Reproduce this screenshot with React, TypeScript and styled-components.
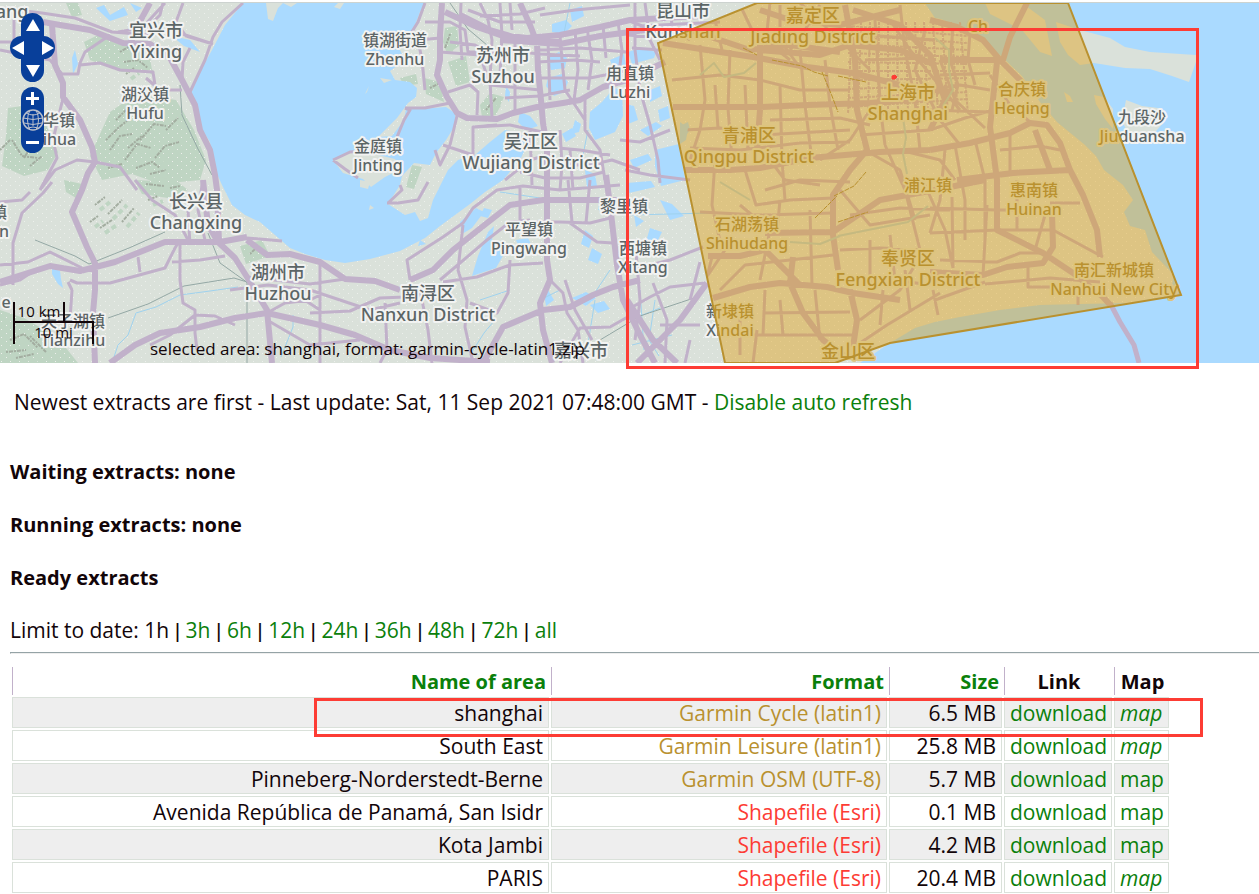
import React from "react";
import styled, { createGlobalStyle } from "styled-components";

const GlobalStyle = createGlobalStyle`
  body {
    margin: 0;
    background: #fff;
    color: #120509;
    font-family: "Open Sans", "Noto Sans", "Noto Sans CJK SC", sans-serif;
    font-size: 21px;
    line-height: 27px;
  }
`;

const GREEN = "#0b800b";
const RED = "#fd3c34";
const NAVY = "#083f9a";
const ROAD = "#c1b1ca";
const LAND = "#dae1da";
const WATER = "#aadaff";
const PARK = "#bfd5c3";
const GOLD = "#b9912f";
const SAND = "#ddc47e";
const INK = "#5c6566";
const HALO = "#f2f3f2";

/* ---------- layout ---------- */

const Page = styled.div`
  overflow: hidden;
`;

const MapFrame = styled.section`
  position: relative;
  height: 360px;
  border-top: 1px solid #cdd3d0;
  margin-top: 2px;
`;

const MapDrawing = styled.svg`
  display: block;
  width: 100%;
  height: 360px;
`;

const Highlight = styled.div<{ $left: number; $top: number; $width: number; $height: number }>`
  position: absolute;
  box-sizing: border-box;
  left: ${(p) => p.$left}px;
  top: ${(p) => p.$top}px;
  width: ${(p) => p.$width}px;
  height: ${(p) => p.$height}px;
  border: 3px solid ${RED};
  pointer-events: none;
`;

const Controls = styled.div`
  position: absolute;
  left: 10px;
  top: 10px;
  display: flex;
  flex-direction: column;
  align-items: center;
  gap: 5px;
`;

const PanPad = styled.div`
  position: relative;
  display: grid;
  grid-template: repeat(3, 23px) / repeat(3, 15px);
  &::before,
  &::after {
    content: "";
    position: absolute;
    background: ${NAVY};
    border-radius: 12px;
  }
  &::before {
    inset: 0 11px;
  }
  &::after {
    inset: 23px 0;
  }
`;

const PanButton = styled.button<{ $area: string }>`
  grid-area: ${(p) => p.$area};
  z-index: 1;
  display: flex;
  align-items: center;
  justify-content: center;
  padding: 0;
  border: 0;
  background: none;
  cursor: pointer;
`;

const ZoomPad = styled.div`
  display: flex;
  flex-direction: column;
  width: 23px;
  border-radius: 12px;
  background: ${NAVY};
`;

const ZoomButton = styled.button`
  display: flex;
  align-items: center;
  justify-content: center;
  height: 22px;
  padding: 0;
  border: 0;
  background: none;
  cursor: pointer;
`;

const ScaleLine = styled.div`
  position: absolute;
  left: 13px;
  top: 299px;
  font-size: 15px;
  line-height: 19px;
  text-align: center;
`;

const ScaleTop = styled.div`
  box-sizing: border-box;
  width: 52px;
  border: solid #120509;
  border-width: 0 2px;
`;

const ScaleBottom = styled.div`
  box-sizing: border-box;
  width: 81px;
  height: 23px;
  border: solid #120509;
  border-width: 2px 2px 0;
`;

const Selection = styled.div`
  position: absolute;
  left: 150px;
  bottom: 3px;
  font-size: 17px;
  line-height: 22px;
`;

const Content = styled.main`
  padding: 26px 0 0 10px;
`;

const Status = styled.p`
  margin: 0 0 42px;
  padding-left: 4px;
`;

const Heading = styled.h4`
  margin: 0 0 26px;
  font-size: 20px;
  font-weight: 700;
`;

const Limits = styled.nav`
  padding-bottom: 8px;
`;

const Bar = styled.span`
  font-family: "Liberation Sans", sans-serif;
`;

const TextLink = styled.a<{ $italic?: boolean }>`
  color: ${GREEN};
  text-decoration: none;
  font-style: ${(p) => (p.$italic ? "italic" : "normal")};
`;

const Rule = styled.hr`
  margin: 0;
  border: solid #95a3a6;
  border-width: 1px 0 1px 1px;
  border-bottom-color: #eee;
`;

const TableArea = styled.div`
  position: relative;
  padding: 11px 88px 0 0;
`;

const ExtractTable = styled.table`
  width: 100%;
  table-layout: fixed;
  border-collapse: separate;
  border-spacing: 2px;
`;

const Col = styled.col<{ $width?: number }>`
  width: ${(p) => (p.$width ? `${p.$width}px` : "auto")};
`;

const HeadCell = styled.th<{ $align?: string }>`
  padding: 2px 3px 0 4px;
  border-left: 1px solid ${ROAD};
  font-size: 20px;
  text-align: ${(p) => p.$align ?? "right"};
  line-height: 26px;
`;

const Cell = styled.td<{ $tone?: string; $align?: string }>`
  padding: 2px 5px 0;
  border: 1px solid #dae1da;
  color: ${(p) => p.$tone ?? "inherit"};
  text-align: ${(p) => p.$align ?? "right"};
  line-height: 27px;
  white-space: nowrap;
`;

const Row = styled.tr`
  &:nth-child(odd) ${Cell} {
    background: #eee;
  }
`;

/* ---------- map geometry ---------- */

const majorRoads = [
  "43,22 60,25 90,30 123,43 150,44 170,58 182,80 195,105 200,130 210,150 215,175 217,190 219,242",
  "52,25 55,65 63,83 63,97 80,120 92,147 95,162 88,173 82,190 72,212 87,247 95,263 95,290 93,313 95,363",
  "0,282 50,266 80,271 115,262 165,242 220,242 247,237",
  "203,180 208,225 218,242 235,258 247,277 267,310 272,363",
  "247,240 267,255 290,254 320,262 345,279 375,281 400,290",
  "110,363 135,345 160,333 200,327 235,318 267,313 320,325 355,335 390,350 430,358 490,362",
  "442,3 440,35 440,60 437,75 447,97 457,113 467,118 497,119 513,113 537,107 563,103 580,100 603,87 627,80 665,62",
  "520,3 530,25 537,43 538,70 541,100 543,123 547,147 547,190 547,260 550,280 540,303 543,330 552,363",
  "445,12 477,27 500,35 527,38 560,35 600,27 630,20 700,16",
  "410,280 433,270 453,250 487,223 510,205 543,200 627,200",
  "483,363 503,327 543,310 570,307 593,295 613,287 640,280",
  "606,175 610,205 617,265 623,300 640,335 655,363",
  "707,283 680,320 653,347 637,363",
  "627,300 653,340 677,363",
  "150,3 138,25 130,44",
  "460,15 490,30 530,42 560,42",
  "500,40 560,44 600,36 660,28",
];

const minorRoads = [
  "0,8 42,13 75,18 112,32 150,35 170,30 213,44",
  "243,3 222,22 213,37 205,60 190,92",
  "70,280 77,283 110,283 165,268 175,248 180,240",
  "180,245 180,280 183,303 195,310 195,333 197,350",
  "172,262 200,260 225,256",
  "138,257 140,272",
  "13,285 13,243 22,213 43,193 52,182",
  "0,202 22,200 30,192",
  "40,190 55,170 77,160 95,162 120,167 137,190",
  "110,35 85,52 80,63 78,74 62,74 50,60 0,50",
  "80,65 100,63 120,70 153,72 155,85",
  "0,42 14,42 14,8",
  "40,190 57,158 53,140 63,98",
  "0,265 28,262 50,252 82,268",
  "0,285 20,280 35,270",
  "68,282 72,290 70,320",
  "183,3 176,22 186,36 213,44",
  "165,3 142,28 118,32",
  "190,48 183,62 182,80",
  "182,90 160,90 146,78",
  "163,3 160,15 145,30",
  "135,180 152,200 175,215 188,240",
  "188,210 190,245",
  "203,180 198,210 205,240",
  "150,345 170,335 195,315 215,316 235,325",
  "282,241 247,238",
  "267,313 285,303 310,300 320,295",
  "320,262 320,363",
  "247,277 310,284 345,279",
  "230,290 268,285 310,290 370,310 400,303",
  "385,303 387,350 380,363",
  "420,290 428,330 432,363",
  "267,320 310,345 360,340",
  "310,313 350,311 380,298 405,297",
  "270,300 300,297 320,310",
  "410,280 407,260 443,237 463,223 473,208 497,190 523,186 560,190 620,185",
  "463,225 458,270 467,300 465,327 473,363",
  "440,280 487,240 510,222 530,220",
  "443,282 477,277 510,265 543,263",
  "510,260 508,293 497,313 470,303",
  "550,280 563,293 567,313 578,330 583,363",
  "570,223 597,242 613,243",
  "520,187 520,222",
  "530,130 532,185",
  "568,180 572,222",
  "590,180 586,223",
  "510,222 560,222 590,223 610,218",
  "560,363 580,328 610,327 640,310",
  "565,280 575,310 592,340",
  "497,125 473,127 473,155 443,145",
  "475,127 510,125 547,133",
  "457,116 450,145 440,165 435,150",
  "405,108 425,108 450,103",
  "425,3 418,22 408,38",
  "440,38 418,40 422,60 425,90",
  "425,22 450,22 465,30 468,52 498,52",
  "461,3 460,30 462,60",
  "440,52 480,55 490,85 520,88 540,90",
  "448,92 470,85 478,92 477,115",
  "480,3 488,20 492,40 490,80 492,118",
  "500,3 502,35 500,75",
  "510,3 512,30",
  "468,10 500,22 535,22",
  "515,40 515,110",
  "480,16 520,14 545,8",
  "450,42 475,45 500,60",
  "500,50 540,54 580,56",
  "505,98 540,96 570,90",
  "548,40 550,100",
  "540,15 575,10 630,5",
  "537,50 580,48 627,52",
  "537,62 575,60 600,62",
  "540,78 590,78 630,70",
  "560,35 562,60 565,90 585,120",
  "575,30 578,70 574,100",
  "587,28 592,60 588,90",
  "603,25 606,58",
  "618,22 622,50 618,80",
  "585,98 585,130 600,150 605,180",
  "547,147 580,150 610,155",
  "547,165 590,165 612,160 640,170",
  "505,180 530,160 547,155",
  "520,172 545,178 580,178 604,172",
  "560,190 562,165 560,130",
  "573,190 570,150",
  "635,3 635,50 640,90 650,125 658,160 660,183",
  "620,140 640,142 670,130",
  "625,170 650,175 690,180",
  "627,20 665,35",
  "645,3 650,40 660,60",
  "627,35 670,38",
  "632,48 662,50",
  "640,26 720,22",
  "670,3 672,26 690,40",
  "703,247 670,260 650,265",
  "653,283 667,320 665,363",
  "627,310 650,297 670,287 705,283",
  "700,262 690,300",
  "635,240 640,300 635,340",
  "700,325 660,325",
  "690,340 685,363",
  "333,160 350,152 375,150",
  "333,160 345,169 358,178",
  "387,203 398,203 418,200 428,182",
  "400,185 402,190 388,203",
  "397,137 404,120 410,110 405,108",
];

const areaMajor = [
  "663,43 707,50 753,57 807,67 853,73 900,85 950,92",
  "673,107 720,107 760,107 807,105 870,103 930,98",
  "760,45 760,110 757,150",
  "845,5 855,60 857,110 867,150 850,170 833,195 833,235 838,270",
  "765,233 833,232 880,200 935,190 985,180",
  "713,298 750,287 780,283 827,287 853,293 900,300",
  "793,257 790,283 803,313 823,340 850,360",
  "997,62 990,127 997,180 997,230 1043,253 1073,273 1103,297 1112,307",
  "1052,213 1053,247 1043,263 1007,267 983,275 930,272",
  "930,20 957,27 983,40 1000,60 1023,83",
  "1027,3 1010,37 1003,60 940,60",
  "930,150 970,143 1010,133 1030,123 1047,125 1060,143 1070,170 1083,195 1097,230 1100,257",
  "957,180 1013,173 1070,170",
  "685,170 730,170 760,168 810,158 880,152 930,150",
  "708,256 740,256 765,250 800,285",
  "853,10 900,25 930,55 945,100 930,130",
  "760,10 790,20 840,25 900,10",
  "690,30 750,50 790,45 840,52",
  "850,290 857,320 853,347",
  "760,50 820,55 850,45 900,50 935,65",
  "1035,130 1050,170",
];

const areaMinor = [
  "700,45 705,100 700,130 690,160",
  "730,50 728,108 732,160",
  "672,80 720,75 760,80 800,90 850,90",
  "740,5 752,30 790,60",
  "715,20 722,50",
  "770,3 765,50",
  "780,5 780,40 800,68",
  "800,3 840,40 870,70",
  "820,5 805,30 790,50",
  "800,50 805,105 812,160",
  "825,60 830,105 838,150",
  "685,130 720,128 760,135 850,130",
  "780,85 782,160 785,200",
  "745,85 748,150",
  "715,85 718,128",
  "690,148 740,150 800,143 850,142",
  "770,120 840,118 870,125",
  "715,160 712,205 722,250",
  "745,170 756,205 790,200 833,198",
  "770,160 785,180 820,185",
  "765,190 800,180 850,182",
  "700,212 760,215 833,213",
  "740,205 770,230 760,280",
  "712,257 705,285",
  "720,290 745,265 790,260 833,255",
  "725,250 708,275",
  "763,313 850,312",
  "753,335 853,335",
  "757,330 753,363",
  "765,290 763,335",
  "780,300 783,335",
  "740,315 740,355",
  "815,290 820,340",
  "857,345 887,325 940,293",
  "860,320 900,290 915,265",
  "840,250 880,248 930,250",
  "865,150 900,170 915,220",
  "850,215 900,208 950,210",
  "880,105 885,145 905,190 920,250",
  "900,5 905,50 915,100 920,150",
  "875,20 880,100",
  "865,60 925,58",
  "865,35 935,40",
  "870,115 930,110 990,112",
  "860,135 930,130",
  "890,20 910,50 960,110",
  "870,110 850,140 820,160",
  "925,30 915,70 940,120 960,145",
  "940,60 955,100 985,128",
  "940,75 990,73",
  "930,90 960,85 990,90",
  "953,28 950,60 958,85 952,110",
  "970,33 968,60 975,85",
  "930,130 965,118 1000,108",
  "990,75 1010,105 1030,122",
  "955,145 965,200 965,240",
  "975,140 985,180 985,240",
  "1010,135 1010,172",
  "945,150 940,200 930,233",
  "1000,150 1040,146 1060,150",
  "952,197 953,268",
  "987,205 983,275",
  "930,208 997,210 1052,210",
  "930,233 997,230 1053,230 1103,257",
  "940,260 997,262 1020,253 1045,253",
  "1017,180 1017,230",
  "1045,215 1035,250",
  "1050,203 1080,203",
  "1028,262 1028,287 1050,287",
  "985,284 1050,278 1100,282",
  "935,300 985,282",
  "933,290 938,315",
  "883,290 880,325",
  "905,270 910,310",
  "870,240 870,290",
  "890,235 895,280 930,285",
  "1078,290 1078,305",
  "900,150 940,160 955,180",
  "925,185 945,230 953,268",
  "840,190 870,225 930,215",
  "810,210 812,285",
  "780,200 777,232",
];

const cityStreets = Array.from({ length: 13 }, (_, i) => `M${852 + i * 9} 22l${i - 4} 92`)
  .concat(Array.from({ length: 10 }, (_, i) => `M848 ${26 + i * 9}l120 ${10 - i * 2}`))
  .join("");

const toPath = (lines: string[]) => lines.map((l) => `M${l.split(" ").join("L")}`).join("");

const lakes =
  "M96 8l8-3 6 10 14-8 4 8-18 6zM172 36l18 4 10 12-16-6zM75 50l3 14-5 10-1-16zM52 268l8 3 1 8 2 9-5-4-6-10zM130 3l12 5-6 4z" +
  "M547 58l12-6 8 6-2 10-14 2zM548 78l14-4 6 8-4 10-10 4-8-10zM552 24l14-4 6 6-8 8-12-2zM570 10l12-4 2 10-12 6z" +
  "M590 112l12-10 12-14 8 2 1 26-8 16-20 8-6-12zM575 120l6 4-2 8-8 2zM562 134l10-6 4 8-10 6zM520 112l10 4 8 10-12 4-8-8z" +
  "M506 86l4 6-1 10-4-6zM585 170l10 4 2 12-10 2zM610 60l14-6 2 12-12 4zM628 52l12-4 16 4-2 6-22 6z" +
  "M488 232l6-6-2 14 12 14-8 14-24 8 6-20zM460 222l16-14 8 4-12 16-10 6zM484 208l8 2-4 8-8-2zM516 240l12-2 4 8-12 4zM600 200l14 4-2 8-14-2zM585 230l8 6-4 12-8-4zM592 248l10 6-4 10-10-4zM572 298l14-6 10 6-10 8zM544 294l4-4 6 10-8 6zM590 305l14-4 6 8-12 4zM420 240l6 4-8 2z" +
  "M655 150l24-6 6 36-24 6-6-20zM626 104l8 2 4 14-10 4zM640 130l16-8 6 4-14 10zM630 160l18-6 4 6-18 8zM660 200l12 4 12 12-14 4zM650 228l12 4-6 12-12 4zM658 110l10-4 2 12-10 4zM650 90l10-4 2 10-12 6zM634 215l10 6-8 6zM627 183l24-2 4 6-26 6z" +
  "M680 126l8-4 2 8-6 8z";

const parks =
  "M84 42l16-8 22 6 28 18 2 12-30 2-32-12zM8 108l14-2 20 10 16 36-10 18-24 6-22-10 4-30zM110 112l26-18 40 6 18 30 12 30-6 20-40 4-28-10-30 6-12-24z" +
  "M0 310l24 8 34 20 20 25H0zM240 246l22-6 8 16-24 8zM134 180l44 2 10 8-20 8-26-4zM400 78l16-4 2 10-14 2zM445 28l12-2 2 20-12 8-4-12z" +
  "M448 62l18-6 4 26-14 4zM424 78l16 4 4 20-18-8zM480 105l10-12 14 4-8 18-14 2zM348 155l24 2 20 14-14 10-26-12zM412 165l10 2-8 22-8-2zM66 3l12 0 4 12-10 2zM64 180l18 4-6 14-10-6z";

const hills =
  "M120 52l10-6 8 4M124 62l14-2 10 8M126 74l8-6M110 150l10-14 12-2M106 140l12-12 10-8M125 160l12-16 14 4M128 148l14-12M140 140l14-16 12 2M155 158l10-12 14-4M166 130l12-12M108 168l14-4M136 168l16-6 8 6M150 174l16-4M20 120l8 16 14 4M12 140l10 16 16 2M24 158l6-10 14-4M30 166l12-10M0 150l10-10M10 340l14-6 14 14M6 352l20-2M16 358l18-4M30 336l16 16M95 205l10-8M108 214l14-14M122 222l12-14M90 222l8-6M100 228l12-8M148 200l10-4M116 120l10-10M450 34l-5 14M430 88l8-4M486 110l10-12M250 254l8-8M146 184l18 2M170 188l10-2";

const streams =
  "M112 363l6-18 10-10 8-22 20-6 24-12 30-4 28-4M293 315l0 12-12 30M570 3l-6 30M588 130l-8 40M470 355l14-22 10-12M595 300l-8 50M560 290l-20 10M610 270l-20 30M640 290l4 60M655 300l-6 40 10 16M630 215l80-2M500 192l40 6M480 300l30-10M630 320l30-12M632 345l40-10";

const rails =
  "M180 85l2 30 16 34 14 26M35 240l40 16 14 8 40-16 36-16M108 318l40-14 36-18 50-8 13 4v81M208 233l12 30 28 20M450 3l18 26 26 22M560 35l60-14M600 340l40-24 60-20";

type Label = { x: number; y: number; zh: string; en?: string; big?: boolean; inside?: boolean; edge?: string };

const labels: Label[] = [
  { x: 156, y: 37, zh: "宜兴市", en: "Yixing", big: true },
  { x: 145, y: 100, zh: "湖㳇镇", en: "Hufu" },
  { x: 51, y: 126, zh: "丁华镇", en: "Taihua" },
  { x: 395, y: 46, zh: "镇湖街道", en: "Zhenhu" },
  { x: 503, y: 62, zh: "苏州市", en: "Suzhou", big: true },
  { x: 630, y: 79, zh: "甪直镇", en: "Luzhi" },
  { x: 378, y: 152, zh: "金庭镇", en: "Jinting" },
  { x: 531, y: 148, zh: "吴江区", en: "Wujiang District", big: true },
  { x: 196, y: 208, zh: "长兴县", en: "Changxing", big: true },
  { x: 624, y: 212, zh: "黎里镇" },
  { x: 529, y: 235, zh: "平望镇", en: "Pingwang" },
  { x: 643, y: 254, zh: "西塘镇", en: "Xitang" },
  { x: 278, y: 279, zh: "湖州市", en: "Huzhou", big: true },
  { x: 428, y: 300, zh: "南浔区", en: "Nanxun District", big: true },
  { x: 73, y: 327, zh: "天子湖镇", en: "Tianzihu" },
  { x: 581, y: 357, zh: "嘉兴市", big: true },
  { x: 683, y: 17, zh: "昆山市", en: "Kunshan", big: true, edge: "kunshan" },
  { x: 813, y: 22, zh: "嘉定区", en: "Jiading District", big: true, inside: true },
  { x: 908, y: 99, zh: "上海市", en: "Shanghai", big: true, inside: true },
  { x: 1022, y: 95, zh: "合庆镇", en: "Heqing", inside: true },
  { x: 749, y: 142, zh: "青浦区", en: "Qingpu District", big: true, inside: true },
  { x: 928, y: 191, zh: "浦江镇", inside: true },
  { x: 1034, y: 196, zh: "惠南镇", en: "Huinan", inside: true },
  { x: 747, y: 230, zh: "石湖荡镇", en: "Shihudang", inside: true },
  { x: 908, y: 265, zh: "奉贤区", en: "Fengxian District", big: true, inside: true },
  { x: 1114, y: 276, zh: "南汇新城镇", en: "Nanhui New City", inside: true },
  { x: 730, y: 317, zh: "新埭镇", en: "Xindai", edge: "xindai" },
  { x: 848, y: 358, zh: "金山区", big: true, inside: true },
  { x: 1142, y: 123, zh: "九段沙", en: "Jiuduansha", edge: "jiuduan" },
];

const MapLabel = styled.text<{ $big?: boolean; $ink: string; $halo: string }>`
  font-family: "Noto Sans", "Noto Sans CJK SC", sans-serif;
  font-size: ${(p) => (p.$big ? 18 : 16)}px;
  font-weight: 500;
  text-anchor: middle;
  fill: ${(p) => p.$ink};
  stroke: ${(p) => p.$halo};
  stroke-width: 4px;
  stroke-linejoin: round;
  paint-order: stroke;
`;

/* Splits a label's ink and halo where the outline of the area crosses it. */
const EdgeSplit = ({ id, x, y, dx, dy }: { id: string; x: number; y: number; dx: number; dy: number }) => {
  const pairs = [
    [`${id}-ink`, INK, GOLD],
    [`${id}-halo`, HALO, SAND],
  ];
  return (
    <>
      {pairs.map(([key, outer, inner]) => (
        <linearGradient key={key} id={key} gradientUnits="userSpaceOnUse" x1={x} x2={x + dx} y1={y} y2={y + dy}>
          <stop offset="0" stopColor={outer} />
          <stop offset="1" stopColor={inner} />
        </linearGradient>
      ))}
    </>
  );
};

const AREA = "M757 3L658 43L725 363H835L890 343L1181 295L1068 3Z";

const AreaMap = () => (
  <MapDrawing viewBox="0 3 1259 360" preserveAspectRatio="xMinYMin slice" role="img" aria-label="Map of the selected area">
    <defs>
      <EdgeSplit id="kunshan" x={708} y={23} dx={0.4} dy={1} />
      <EdgeSplit id="xindai" x={716} y={320} dx={1} dy={-0.2} />
      <EdgeSplit id="jiuduan" x={1120} y={137} dx={-1} dy={0.4} />
      <clipPath id="area-clip">
        <path d={AREA} />
      </clipPath>
      <pattern id="grain" width="9" height="8" patternUnits="userSpaceOnUse">
        <path d="M1 1h1v1h-1zM6 5h1v1h-1z" fill="#edf0ec" />
      </pattern>
    </defs>
    <rect y="3" width="1259" height="360" fill={LAND} />
    <path d={parks} fill={PARK} />
    <rect y="3" width="1259" height="360" fill="url(#grain)" />
    <path d={hills} fill="none" stroke={PARK} strokeWidth="4" strokeDasharray="5 3" transform="translate(5 5)" />
    <path d={hills} fill="none" stroke="#a3ada0" strokeWidth="2" strokeDasharray="2 1 4 1" />
    <path
      fill={WATER}
      d="M243 3L225 25L212 50L198 75L190 97L196 110L199 125L210 142L213 165L222 185L232 205L245 215L260 222L275 235L290 248L305 254L325 260L345 263L370 259L400 251L425 238L440 226L455 215L470 204L485 192L503 180L520 160L527 145L520 133L505 130L490 142L475 155L458 160L448 170L440 186L433 200L428 218L420 221L415 212L405 215L388 204L400 185L402 176L414 163L430 165L436 153L446 140L456 124L455 113L446 107L420 109L406 109L404 120L392 136L378 137L397 118L408 103L416 97L417 88L410 82L395 80L390 71L405 60L398 46L412 33L420 12L425 3Z"
    />
    <path
      fill={WATER}
      d="M925 3L935 16L960 28L1000 55L1022 76L1040 102L1057 122L1085 145L1096 156L1104 170L1123 185L1133 200L1124 212L1130 226L1145 230L1152 252L1174 275L1170 295L1130 303L1080 304L1040 305L1000 310L960 317L935 322L915 328L890 343L860 363H1259V3Z"
    />
    <path d={lakes} fill={WATER} />
    <path d={streams} fill="none" stroke="#9fd2ee" strokeWidth="1" />
    <path
      fill={LAND}
      d="M266 3l17 0-5 5-5 13-5-2zM283 3h14l-6 4zM333 160l17-9 20 2 25 6 6 10-16 8-14 10-8-8-20-6zM338 3h6l-4 6-6-2zM380 78l12 2-8 3zM367 92l2-6-4 8zM360 180l10 2-2 7-8-2zM370 205l4 3-5 2z"
    />
    <path
      fill={LAND}
      d="M985 3H1022L1045 20L1052 56L1040 52L1022 30L990 14ZM1056 22L1080 30L1110 38L1125 47L1150 52L1196 55L1196 62L1189 82L1172 76L1150 69L1125 68L1094 63L1080 65L1068 55L1060 42ZM1094 95l10 2 9 12 0 20-8 -10-9-15zM1126 100l16 6 16 2 5 15-12 14-22-2-7-14zM1064 92l6 4 3 6-6 0z"
    />
    <path d={rails} fill="none" stroke="#94a8a5" strokeWidth="1" />
    <g fill="none" stroke={ROAD} strokeLinejoin="round">
      <path d={toPath(minorRoads)} strokeWidth="3" />
      <path d={toPath(majorRoads)} strokeWidth="6" />
      <path d="M1110 303L1120 322L1134 345L1139 363" strokeWidth="5" />
      <g clipPath="url(#area-clip)">
        <path d={cityStreets} strokeWidth="2" strokeDasharray="3 1" />
        <path d={toPath(areaMinor)} strokeWidth="3" />
        <path d={toPath(areaMajor)} strokeWidth="6" />
        <path d="M903 118l3 20-3 16 4 20M700 75l14-12 10 14 20-4 12-10M838 236l30-6 40-8 20-16M750 200l-30-18M790 242l30 2 20-8M935 38l14 12 0 20 4 20-10 16" stroke="#b2cfd6" strokeWidth="2" />
        <path d="M680 122l8 6-2 12-6 4zM925 3h60l-20 20-30-5z" fill={WATER} stroke="none" />
      </g>
    </g>
    <path d={AREA} fill="#e29800" fillOpacity="0.4" />
    <path d="M743 48l14 7M772 60l30 6 12 6 14 4M822 72l10 24 6 16M838 76l28 6M866 172l-12 14-20 10M815 218l22-22M838 222l30-10" fill="none" stroke={GOLD} strokeWidth="1" strokeDasharray="5 1" />
    {labels.map((l) => {
      const look = {
        $big: l.big,
        $ink: l.edge ? `url(#${l.edge}-ink)` : l.inside ? GOLD : INK,
        $halo: l.edge ? `url(#${l.edge}-halo)` : l.inside ? SAND : HALO,
      };
      return (
        <g key={l.zh}>
          <MapLabel {...look} x={l.x} y={l.y}>{l.zh}</MapLabel>
          {l.en && <MapLabel {...look} x={l.x} y={l.y + (l.big ? 21 : 19)}>{l.en}</MapLabel>}
        </g>
      );
    })}
    <MapLabel $ink={GOLD} $halo={SAND} x="978" y="32">Ch</MapLabel>
    <MapLabel $big $ink={INK} $halo={HALO} x="12" y="18">ang</MapLabel>
    <MapLabel $ink={INK} $halo={HALO} x="-1" y="218">镇</MapLabel>
    <MapLabel $ink={INK} $halo={HALO} x="4" y="237">n</MapLabel>
    <MapLabel $ink={INK} $halo={HALO} x="6" y="308">e</MapLabel>
    <path d={AREA} fill="none" stroke={GOLD} strokeWidth="2" />
    <path d="M892 76l3-1 2 2-2 2-3 0z" fill={RED} stroke={RED} strokeWidth="1" />
  </MapDrawing>
);

const Glyph = ({ d, w, h }: { d: string; w: number; h: number }) => (
  <svg width={w} height={h} viewBox={`0 0 ${w} ${h}`} fill="#fff">
    <path d={d} />
  </svg>
);

const MapControls = () => (
  <Controls>
    <PanPad>
      <PanButton $area="1 / 1 / 2 / 4" aria-label="Pan up"><Glyph w={14} h={12} d="M7 0L14 12H0Z" /></PanButton>
      <PanButton $area="2 / 1 / 3 / 2" aria-label="Pan left"><Glyph w={12} h={14} d="M0 7L12 0V14Z" /></PanButton>
      <PanButton $area="2 / 3 / 3 / 4" aria-label="Pan right"><Glyph w={12} h={14} d="M12 7L0 0V14Z" /></PanButton>
      <PanButton $area="3 / 1 / 4 / 4" aria-label="Pan down"><Glyph w={14} h={12} d="M7 12L14 0H0Z" /></PanButton>
    </PanPad>
    <ZoomPad>
      <ZoomButton aria-label="Zoom in">
        <Glyph w={13} h={13} d="M5 0h3v5h5v3H8v5H5V8H0V5h5z" />
      </ZoomButton>
      <ZoomButton aria-label="Zoom to full extent">
        <svg width="22" height="22" viewBox="0 0 22 22" fill="none" stroke="#b9bfcb" strokeWidth="1">
          <circle cx="11" cy="11" r="10" strokeWidth="1.5" />
          <path d="M4 4q7 4 14 0M1 9q10 3 20 0M2 14q9 3 18 0M6 19q5-2 10 0M8 1q-5 10 0 20M14 1q5 10 0 20M11 5v12" />
        </svg>
      </ZoomButton>
      <ZoomButton aria-label="Zoom out">
        <Glyph w={13} h={3} d="M0 0h13v3H0z" />
      </ZoomButton>
    </ZoomPad>
  </Controls>
);

/* ---------- page ---------- */

const limits = ["3h", "6h", "12h", "24h", "36h", "48h", "72h", "all"];

const extracts = [
  { name: "shanghai", format: "Garmin Cycle (latin1)", size: "6.5 MB", tone: GOLD, italic: true },
  { name: "South East", format: "Garmin Leisure (latin1)", size: "25.8 MB", tone: GOLD, italic: true },
  { name: "Pinneberg-Norderstedt-Berne", format: "Garmin OSM (UTF-8)", size: "5.7 MB", tone: GOLD },
  { name: "Avenida República de Panamá, San Isidr", format: "Shapefile (Esri)", size: "0.1 MB", tone: RED },
  { name: "Kota Jambi", format: "Shapefile (Esri)", size: "4.2 MB", tone: RED },
  { name: "PARIS", format: "Shapefile (Esri)", size: "20.4 MB", tone: RED, italic: true },
];

export default function App() {
  return (
    <Page>
      <GlobalStyle />
      <MapFrame>
        <AreaMap />
        <MapControls />
        <ScaleLine>
          <ScaleTop>10 km</ScaleTop>
          <ScaleBottom>10 mi</ScaleBottom>
        </ScaleLine>
        <Selection>selected area: shanghai, format: garmin-cycle-latin1.zip</Selection>
        <Highlight $left={626} $top={25} $width={573} $height={341} />
      </MapFrame>
      <Content>
        <Status>
          Newest extracts are first - Last update: Sat, 11 Sep 2021 07:48:00 GMT -{" "}
          <TextLink href="#refresh">Disable auto refresh</TextLink>
        </Status>
        <Heading>Waiting extracts: none</Heading>
        <Heading>Running extracts: none</Heading>
        <Heading>Ready extracts</Heading>
        <Limits>
          Limit to date: 1h
          {limits.map((l) => (
            <React.Fragment key={l}>
              {" "}
              <Bar>|</Bar>{" "}
              <TextLink href={`#${l}`}>{l}</TextLink>
            </React.Fragment>
          ))}
        </Limits>
        <Rule />
        <TableArea>
          <ExtractTable>
            <colgroup>
              <Col />
              <Col $width={336} />
              <Col $width={113} />
              <Col $width={108} />
              <Col $width={55} />
            </colgroup>
            <thead>
              <tr>
                <HeadCell><TextLink href="#name">Name of area</TextLink></HeadCell>
                <HeadCell><TextLink href="#format">Format</TextLink></HeadCell>
                <HeadCell><TextLink href="#size">Size</TextLink></HeadCell>
                <HeadCell $align="center">Link</HeadCell>
                <HeadCell $align="center">Map</HeadCell>
              </tr>
            </thead>
            <tbody>
              {extracts.map((e) => (
                <Row key={e.name}>
                  <Cell>{e.name}</Cell>
                  <Cell $tone={e.tone}>{e.format}</Cell>
                  <Cell>{e.size}</Cell>
                  <Cell $align="left"><TextLink href="#download">download</TextLink></Cell>
                  <Cell $align="left"><TextLink href="#map" $italic={e.italic}>map</TextLink></Cell>
                </Row>
              ))}
            </tbody>
          </ExtractTable>
          <Highlight $left={304} $top={44} $width={889} $height={39} />
        </TableArea>
      </Content>
    </Page>
  );
}
